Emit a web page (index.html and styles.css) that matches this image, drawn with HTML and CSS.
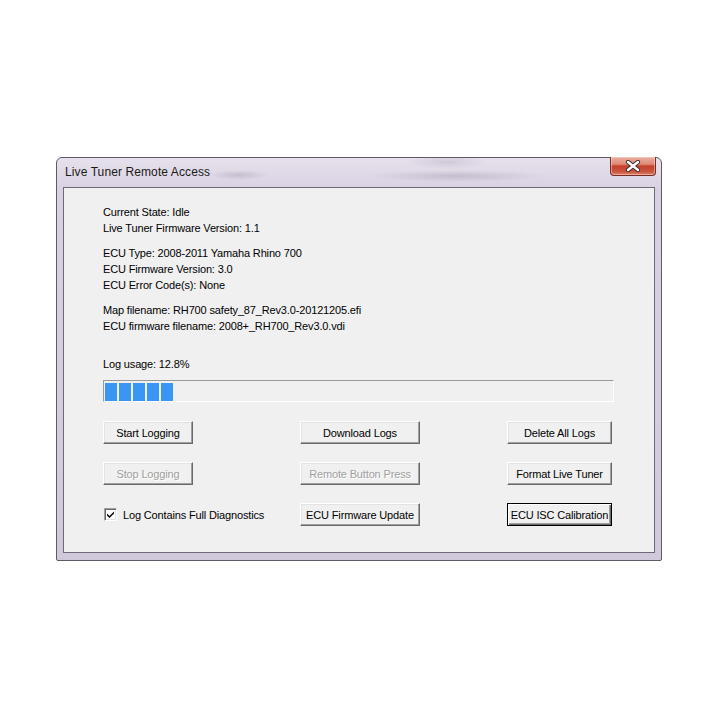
FILE: index.html
```html
<!DOCTYPE html>
<html>
<head>
<meta charset="utf-8">
<link rel="stylesheet" href="styles.css">
</head>
<body>
<div class="window">
  <div class="titlebar">
    <span class="title">Live Tuner Remote Access</span>
    <div class="close">
      <svg width="16" height="12" viewBox="0 0 16 12">
        <path d="M3 2 L13 10 M13 2 L3 10" stroke="#3a2a2a" stroke-width="4.2" stroke-linecap="round"/>
        <path d="M3 2 L13 10 M13 2 L3 10" stroke="#ffffff" stroke-width="2.4" stroke-linecap="round"/>
      </svg>
    </div>
  </div>
  <div class="client">
    <div class="info">
      <div class="group">
        <div>Current State: Idle</div>
        <div>Live Tuner Firmware Version: 1.1</div>
      </div>
      <div class="group">
        <div>ECU Type: 2008-2011 Yamaha Rhino 700</div>
        <div>ECU Firmware Version: 3.0</div>
        <div>ECU Error Code(s): None</div>
      </div>
      <div class="group">
        <div>Map filename: RH700 safety_87_Rev3.0-20121205.efi</div>
        <div>ECU firmware filename: 2008+_RH700_Rev3.0.vdi</div>
      </div>
    </div>
    <div class="logusage">Log usage: 12.8%</div>
    <div class="progress">
      <span class="block"></span><span class="block"></span><span class="block"></span><span class="block"></span><span class="block"></span>
    </div>
    <div class="buttons">
      <button class="btn w1">Start Logging</button>
      <button class="btn w2">Download Logs</button>
      <button class="btn w3">Delete All Logs</button>
      <button class="btn w1 disabled">Stop Logging</button>
      <button class="btn w2 disabled">Remote Button Press</button>
      <button class="btn w3">Format Live Tuner</button>
      <label class="check">
        <span class="box">
          <svg width="9" height="9" viewBox="0 0 9 9"><path d="M1 3.5 L3.5 6 L8 1.5 L8 3.5 L3.5 8 L1 5.5 Z" fill="#000"/></svg>
        </span>
        <span>Log Contains Full Diagnostics</span>
      </label>
      <button class="btn w2">ECU Firmware Update</button>
      <button class="btn w3 default">ECU ISC Calibration</button>
    </div>
  </div>
</div>
</body>
</html>
```
FILE: styles.css
```css
html, body {
  margin: 0;
  padding: 0;
  background: #ffffff;
}
body {
  width: 720px;
  height: 720px;
  overflow: hidden;
  font-family: "Liberation Sans", Arial, sans-serif;
}
.window {
  margin-left: 56px;
  margin-top: 157px;
  width: 606px;
  height: 404px;
  border: 1px solid #5e5a66;
  border-radius: 6px 6px 2px 2px;
  background:
    radial-gradient(ellipse 30px 5px at 182px 17px, rgba(150,140,160,0.35), transparent),
    radial-gradient(ellipse 90px 6px at 400px 18px, rgba(150,140,160,0.35), transparent),
    radial-gradient(ellipse 40px 7px at 390px 4px, rgba(170,160,180,0.35), transparent),
    linear-gradient(180deg, #e6e1ec 0%, #d9d1e2 8%, #d2c8dc 100%);
  display: flex;
  flex-direction: column;
  box-sizing: border-box;
}
.titlebar {
  height: 29px;
  display: flex;
  justify-content: space-between;
  align-items: flex-start;
  padding-left: 8px;
  padding-right: 5px;
}
.title {
  font-size: 12px;
  color: #1a1a1a;
  margin-top: 7px;
  letter-spacing: 0.1px;
}
.close {
  width: 44px;
  height: 18px;
  margin-top: -1px;
  border: 1px solid #7a2a22;
  border-top: none;
  border-radius: 0 0 4px 4px;
  background: linear-gradient(180deg, #eab0a2 0%, #df8a76 40%, #c3402c 50%, #c9553e 80%, #dc806a 100%);
  display: flex;
  align-items: center;
  justify-content: center;
  box-shadow: inset 0 0 0 1px rgba(255,220,210,0.5);
}
.client {
  margin: 0 6px 7px 6px;
  flex: 1;
  background: #f0f0f0;
  border: 1px solid #6d6a75;
  padding: 16px 0 0 39px;
  font-size: 11px;
  letter-spacing: -0.15px;
  color: #000;
  box-sizing: border-box;
}
.info .group {
  line-height: 16px;
  margin-bottom: 9px;
}
.logusage {
  line-height: 16px;
  margin-top: 22px;
}
.progress {
  margin-top: 8px;
  width: 511px;
  height: 22px;
  box-sizing: border-box;
  border: 1px solid #ffffff;
  border-top-color: #9a9a9a;
  border-left-color: #9a9a9a;
  background: #f0f0f0;
  display: flex;
  gap: 2px;
  padding: 2px 0 0 1px;
}
.block {
  width: 12px;
  height: 18px;
  background: #3a96f5;
}
.buttons {
  margin-top: 19px;
  display: grid;
  grid-template-columns: 197px 207px 105px;
  grid-auto-rows: 23px;
  row-gap: 18px;
  align-items: center;
}
.btn {
  height: 23px;
  box-sizing: border-box;
  font-family: "Liberation Sans", Arial, sans-serif;
  font-size: 11px;
  letter-spacing: -0.15px;
  color: #000;
  background: #f0f0f0;
  border: 1px solid;
  border-color: #ffffff #696969 #696969 #ffffff;
  box-shadow: inset -1px -1px 0 #a0a0a0, inset 1px 1px 0 #e3e3e3;
  padding: 0;
  margin: 0;
}
.w1 { width: 90px; }
.w2 { width: 120px; }
.w3 { width: 105px; }
.btn.disabled {
  color: #a0a0a0;
  text-shadow: 1px 1px 0 #ffffff;
}
.btn.default {
  border: 1px solid #000;
  box-shadow: inset 1px 1px 0 #ffffff, inset -1px -1px 0 #696969, inset -2px -2px 0 #a0a0a0;
}
.check {
  display: flex;
  align-items: center;
  gap: 6px;
  padding-left: 1px;
}
.box {
  width: 13px;
  height: 13px;
  box-sizing: border-box;
  background: #ffffff;
  border: 1px solid;
  border-color: #a0a0a0 #ffffff #ffffff #a0a0a0;
  box-shadow: inset 1px 1px 0 #696969, inset -1px -1px 0 #e3e3e3;
  display: flex;
  align-items: center;
  justify-content: center;
}
```
